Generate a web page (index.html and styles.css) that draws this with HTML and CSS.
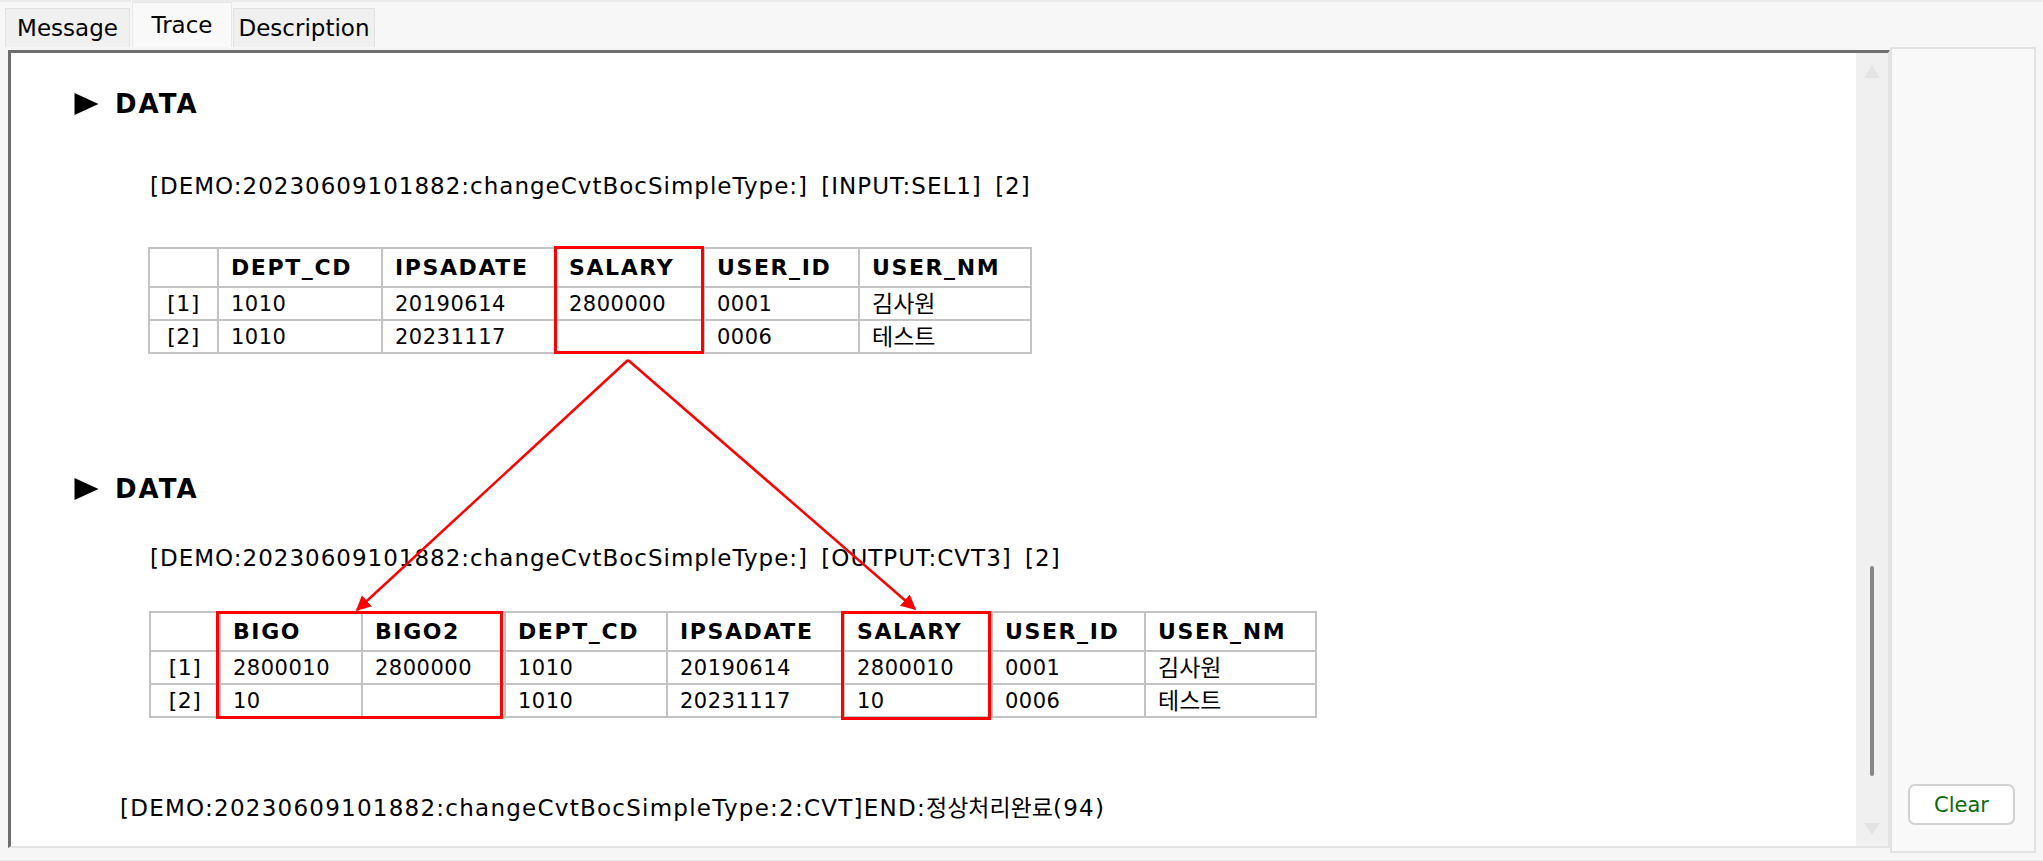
FILE: index.html
```html
<!DOCTYPE html>
<html>
<head>
<meta charset="utf-8">
<link rel="stylesheet" href="styles.css">
</head>
<body>
<div class="window">
  <div class="tabbar">
    <div class="tab">Message</div>
    <div class="tab active">Trace</div>
    <div class="tab">Description</div>
  </div>
  <div class="main">
    <div class="frame">
      <div class="scroll">
        <div class="head"><svg class="tri" viewBox="0 0 24 22"><path d="M0 0 L24 11 L0 22 Z" fill="#000"/></svg><span>DATA</span></div>
        <div class="title t1">[DEMO:20230609101882:changeCvtBocSimpleType:] [INPUT:SEL1] [2]</div>
        <div class="tbl-wrap w1">
          <table class="grid g1">
            <colgroup><col class="c-idx1"><col class="c-dept1"><col class="c-ipsa1"><col class="c-sal1"><col class="c-uid1"><col class="c-unm1"></colgroup>
            <tr class="hdr"><th></th><th>DEPT_CD</th><th>IPSADATE</th><th>SALARY</th><th>USER_ID</th><th>USER_NM</th></tr>
            <tr><td class="idx">[1]</td><td>1010</td><td>20190614</td><td>2800000</td><td>0001</td><td class="ko">김사원</td></tr>
            <tr><td class="idx">[2]</td><td>1010</td><td>20231117</td><td></td><td>0006</td><td class="ko">테스트</td></tr>
          </table>
          <div class="mark m1"></div>
        </div>
        <div class="head h2"><svg class="tri" viewBox="0 0 24 22"><path d="M0 0 L24 11 L0 22 Z" fill="#000"/></svg><span>DATA</span></div>
        <div class="title t2">[DEMO:20230609101882:changeCvtBocSimpleType:] [OUTPUT:CVT3] [2]</div>
        <div class="tbl-wrap w2">
          <table class="grid g2">
            <colgroup><col class="c-idx2"><col class="c-bigo"><col class="c-bigo2"><col class="c-dept2"><col class="c-ipsa2"><col class="c-sal2"><col class="c-uid2"><col class="c-unm2"></colgroup>
            <tr class="hdr"><th></th><th>BIGO</th><th>BIGO2</th><th>DEPT_CD</th><th>IPSADATE</th><th>SALARY</th><th>USER_ID</th><th>USER_NM</th></tr>
            <tr><td class="idx">[1]</td><td>2800010</td><td>2800000</td><td>1010</td><td>20190614</td><td>2800010</td><td>0001</td><td class="ko">김사원</td></tr>
            <tr><td class="idx">[2]</td><td>10</td><td></td><td>1010</td><td>20231117</td><td>10</td><td>0006</td><td class="ko">테스트</td></tr>
          </table>
          <div class="mark m2"></div>
          <div class="mark m3"></div>
        </div>
        <div class="final">[DEMO:20230609101882:changeCvtBocSimpleType:2:CVT]END:<span class="ko">정상처리완료</span>(94)</div>
      </div>
      <div class="vscroll">
        <span class="arr up"></span>
        <span class="thumb"></span>
        <span class="arr down"></span>
      </div>
    </div>
    <div class="side">
      <button class="clear">Clear</button>
    </div>
  </div>
  <svg class="arrows" viewBox="0 0 2043 861" width="2043" height="861">
    <defs>
      <marker id="ah" viewBox="0 0 10 10" refX="9" refY="5" markerWidth="15" markerHeight="15" markerUnits="userSpaceOnUse" orient="auto">
        <path d="M0 0 L10 5 L0 10 Z" fill="#ff0000"/>
      </marker>
    </defs>
    <line x1="628" y1="360" x2="357" y2="610" stroke="#ff0000" stroke-width="2.5" marker-end="url(#ah)"/>
    <line x1="628" y1="360" x2="915" y2="609" stroke="#ff0000" stroke-width="2.5" marker-end="url(#ah)"/>
  </svg>
</div>
</body>
</html>
```

FILE: styles.css
```css
* { box-sizing: border-box; }
html, body { margin: 0; padding: 0; }
body {
  font-family: "DejaVu Sans", "Noto Sans CJK KR", sans-serif;
  color: #000;
  background: #f5f5f5;
}
.window {
  position: relative;
  width: 2043px;
  height: 861px;
  background: #f6f6f6;
  overflow: hidden;
}
.tabbar {
  height: 47px;
  display: flex;
  align-items: flex-end;
  padding-left: 5px;
  background: #f7f7f7;
  border-top: 2px solid #ececec;
}
.tab {
  height: 39px;
  padding: 0 11px;
  margin-right: 2px;
  background: #f0f0f0;
  border: 1px solid #e2e2e2;
  border-bottom: none;
  font-size: 23px;
  line-height: 36px;
  display: flex;
  align-items: center;
  justify-content: center;
}
.tab:nth-child(1) { width: 125px; }
.tab.active {
  height: 45px;
  width: 100px;
  background: #f9f9f9;
  border-color: #e8e8e8;
  align-items: flex-start;
  padding-top: 4px;
  margin-right: 1px;
}
.tab:nth-child(3) { width: 142px; }

.main {
  display: flex;
  height: 814px;
  padding-bottom: 8px;
  border-bottom: 1px solid #e4e4e4;
}
.frame {
  margin-left: 8px;
  margin-top: 3px;
  width: 1882px;
  height: 798px;
  display: flex;
  border-top: 3px solid #6e6e6e;
  border-left: 3px solid #6e6e6e;
  border-right: 2px solid #e4e4e4;
  border-bottom: 2px solid #e4e4e4;
}
.scroll {
  flex: 1;
  background: #fff;
  padding-left: 63px;
  padding-top: 36px;
  overflow: hidden;
}
.vscroll {
  width: 32px;
  background: #f0f0f0;
  display: flex;
  flex-direction: column;
  align-items: center;
  padding-top: 12px;
}
.arr {
  width: 0;
  height: 0;
  border-left: 8px solid transparent;
  border-right: 8px solid transparent;
}
.arr.up { border-bottom: 13px solid #e3e3e3; }
.arr.down { border-top: 12px solid #e3e3e3; margin-top: 47px; }
.thumb {
  width: 4px;
  height: 210px;
  margin-top: 488px;
  background: #878787;
  border-radius: 2px;
}
.side {
  width: 146px;
  height: 806px;
  border: 2px solid #e2e2e2;
  background: #f9f9f9;
  display: flex;
  flex-direction: column;
  justify-content: flex-end;
  padding-left: 16px;
  padding-bottom: 26px;
}
.clear {
  width: 107px;
  height: 41px;
  background: #fff;
  border: 2px solid #d2d2d2;
  border-radius: 7px;
  color: #0c6a0c;
  font-family: "DejaVu Sans", sans-serif;
  font-size: 21px;
  padding: 0;
}

.head {
  height: 30px;
  display: flex;
  align-items: center;
  font-weight: bold;
  font-size: 26px;
  letter-spacing: 2px;
}
.head .tri { width: 25px; height: 22px; margin-right: 16px; }
.head.h2 { margin-top: 120px; }
.title {
  margin-left: 76px;
  height: 30px;
  line-height: 30px;
  font-size: 23px;
  letter-spacing: 1px;
  word-spacing: 5px;
  white-space: nowrap;
}
.title.t1 { margin-top: 52px; }
.title.t2 { margin-top: 39px; }

.tbl-wrap {
  position: relative;
  margin-left: 74px;
  width: fit-content;
}
.tbl-wrap.w1 { margin-top: 46px; }
.tbl-wrap.w2 { margin-top: 38px; margin-left: 75px; }
.grid {
  border-collapse: separate;
  border-spacing: 0;
  table-layout: fixed;
  border-top: 2px solid #c3c3c3;
  border-left: 2px solid #c3c3c3;
  font-size: 21px;
}
.grid th, .grid td {
  border-right: 2px solid #c3c3c3;
  border-bottom: 2px solid #c3c3c3;
  padding: 0 0 0 12px;
  text-align: left;
  white-space: nowrap;
  overflow: hidden;
}
.grid th {
  height: 39px;
  line-height: 36px;
  font-weight: bold;
  font-size: 22px;
  letter-spacing: 1.6px;
}
.grid td { height: 33px; line-height: 30px; letter-spacing: 0.5px; }
.grid td.idx { text-align: center; padding: 0; font-size: 22px; }
.grid td.ko { font-size: 23px; letter-spacing: 0; line-height: 30px; }
.final .ko { font-size: 23px; letter-spacing: 0; line-height: 1; }
.g1 { width: 882px; }
.g2 { width: 1166px; }
.c-idx1 { width: 69px; }
.c-dept1 { width: 164px; }
.c-ipsa1 { width: 174px; }
.c-sal1 { width: 148px; }
.c-uid1 { width: 155px; }
.c-unm1 { width: 172px; }
.c-idx2 { width: 70px; }
.c-bigo { width: 142px; }
.c-bigo2 { width: 143px; }
.c-dept2 { width: 162px; }
.c-ipsa2 { width: 177px; }
.c-sal2 { width: 148px; }
.c-uid2 { width: 153px; }
.c-unm2 { width: 171px; }

.mark {
  position: absolute;
  border: 3px solid #ff0000;
}
.m1 { left: 406px; top: -1px; width: 150px; height: 108px; }
.m2 { left: 67px; top: 0; width: 287px; height: 108px; }
.m3 { left: 692px; top: 0; width: 150px; height: 109px; }

.final {
  margin-top: 75px;
  margin-left: 46px;
  height: 30px;
  line-height: 30px;
  font-size: 23px;
  letter-spacing: 1.25px;
  white-space: nowrap;
}
.arrows {
  position: absolute;
  left: 0;
  top: 0;
  pointer-events: none;
}
```
